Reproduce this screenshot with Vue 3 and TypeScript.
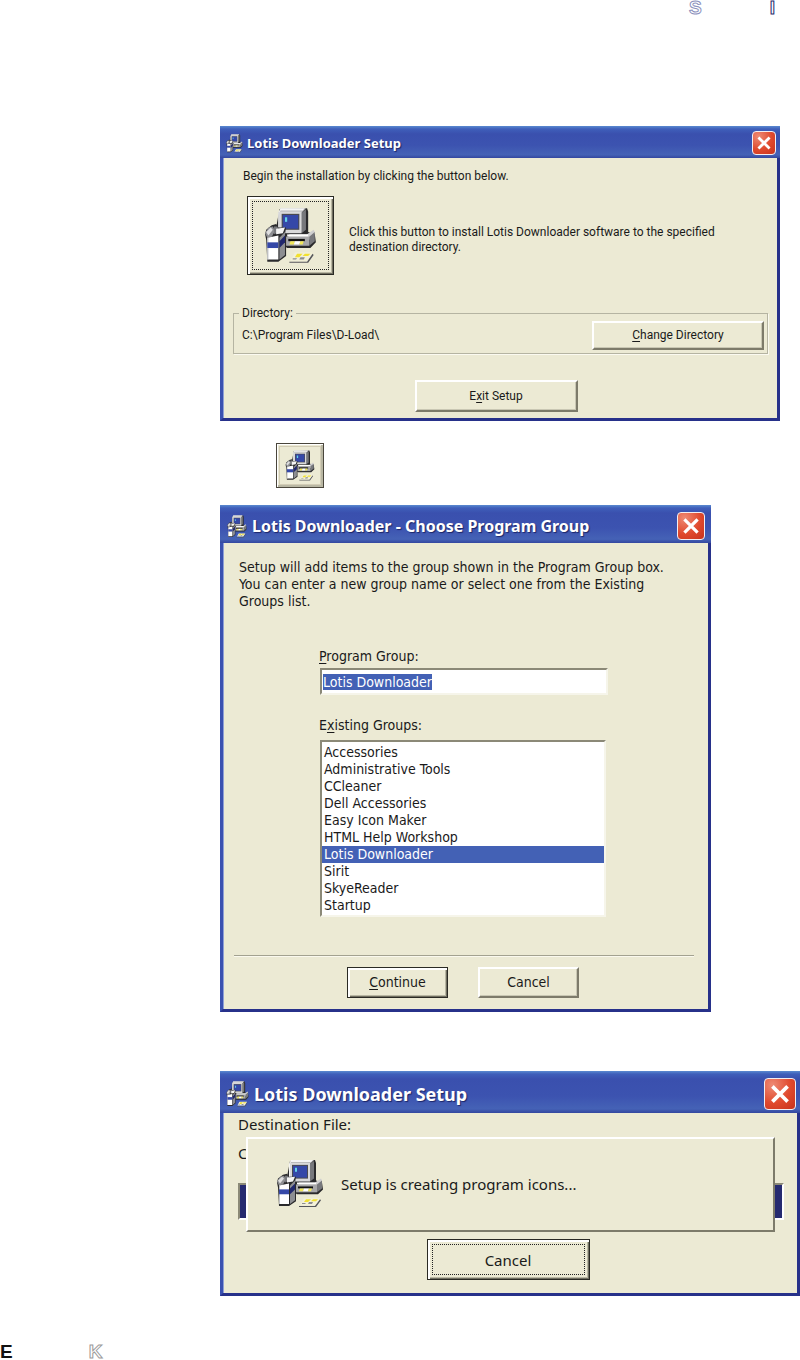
<script setup lang="ts">
import { defineComponent, h, onMounted, ref } from 'vue'

type Shape = [fill: string, points: string]

const shapes: Shape[] = [
  ['#2a2a2c', '15,2 40,1 41,4 41,22 47,24 48,31 43,36 22,36 12,28 12,18'],
  ['#b9b9bb', '16,1 39,1 35,5 35,22 14,22 14,5'],
  ['#f4f4f4', '16,1 38,1 36,3 16,3 15,5 15,20 14,20 14,5'],
  ['#77787c', '35,5 39,2 39,20 35,23'],
  ['#d9d9da', '15,4 35,4 35,23 15,23'],
  ['#4a4a50', '17,6 33,6 33,20 17,20'],
  ['#3548a8', '18,7 32,7 32,19 18,19'],
  ['#63d3ea', '20,9 22,9 22,13 20,13'],
  ['#cfcfd0', '24,24 40,24 46,20 47,22 42,29 22,29'],
  ['#ffffff', '22,24 41,24 41,26 22,26'],
  ['#a7a7a9', '20,26 42,26 42,34 20,34'],
  ['#77787c', '42,26 47,22 47,30 42,34'],
  ['#111', '23,28 38,28 38,30 23,30'],
  ['#f2e85a', '25,30 29,30 28,33 24,33'],
  ['#ffffff', '29,30 34,30 33,33 28,33'],
  ['#f2e85a', '34,30 37,30 36,33 33,33'],
  ['#2a2a2c', '2,24 3,20 8,16 12,15 14,18 21,18 20,24 21,26 21,43 14,48 4,48 3,29'],
  ['#8d8e92', '2,23 5,18 9,17 11,21 8,26 4,27'],
  ['#dededf', '3,22 7,18 9,20 5,25'],
  ['#77787c', '10,17 13,17 15,22 10,24'],
  ['#f4f4f4', '12,19 20,18 18,23 12,24'],
  ['#ffffff', '4,27 14,25 14,46 4,46'],
  ['#bfc0c4', '4,27 5,27 5,46 4,46'],
  ['#3548a8', '4,31 14,31 14,36 4,36'],
  ['#8d8e92', '15,27 20,22 20,42 15,46'],
  ['#20276d', '15,30 20,25 20,31 15,36'],
  ['#55565b', '24,48 40,48 45,41 46,42 41,49 24,49'],
  ['#f3f1d8', '29,40 45,40 40,47 25,47'],
  ['#f2e02e', '31,41 36,41 33,44 29,44'],
  ['#f2e02e', '38,41 43,41 41,43 36,43'],
  ['#8d8e92', '27,45 31,45 30,46 27,46'],
  ['#8d8e92', '34,44 38,44 37,46 33,46'],
]

const SetupIcon = defineComponent({
  setup: () => () =>
    h('svg', { viewBox: '1 0 48 50', preserveAspectRatio: 'none', 'aria-hidden': 'true' },
      shapes.map(([fill, points]) => h('polygon', { fill, points }))),
})

const CloseGlyph = defineComponent({
  setup: () => () =>
    h('svg', { viewBox: '0 0 24 24', 'aria-hidden': 'true' }, [
      h('path', { d: 'M7 7 L17 17 M17 7 L7 17', stroke: '#fff', 'stroke-width': 3, 'stroke-linecap': 'square', fill: 'none' }),
    ]),
})

const groups = [
  'Accessories', 'Administrative Tools', 'CCleaner', 'Dell Accessories', 'Easy Icon Maker',
  'HTML Help Workshop', 'Lotis Downloader', 'Sirit', 'SkyeReader', 'Startup',
]
const programGroup = ref('Lotis Downloader')
const selectedGroup = ref('Lotis Downloader')
const directory = ref('C:\\Program Files\\D-Load\\')
const groupInput = ref<HTMLInputElement | null>(null)

onMounted(() => {
  groupInput.value?.focus()
  groupInput.value?.select()
})
</script>

<template>
  <div class="page">
    <header class="page-head"><span class="outline faint">S</span><span class="outline">I</span></header>

    <main class="content">
      <section class="window setup" aria-label="Setup">
        <div class="titlebar">
          <SetupIcon class="title-icon" />
          <h2>Lotis Downloader Setup</h2>
          <button class="close" type="button" aria-label="Close"><CloseGlyph /></button>
        </div>
        <div class="body">
          <p class="intro">Begin the installation by clicking the button below.</p>
          <div class="install">
            <button class="btn default install-btn" type="button" aria-label="Install">
              <span class="focus"><SetupIcon class="install-icon" /></span>
            </button>
            <p>Click this button to install Lotis Downloader software to the specified<br>destination directory.</p>
          </div>
          <fieldset class="directory">
            <legend>Directory:</legend>
            <span>{{ directory }}</span>
            <button class="btn" type="button"><span><u>C</u>hange Directory</span></button>
          </fieldset>
          <button class="btn exit" type="button"><span>E<u>x</u>it Setup</span></button>
        </div>
      </section>

      <button class="mini" type="button" aria-label="Install"><span><SetupIcon class="mini-icon" /></span></button>

      <section class="window choose" aria-label="Choose Program Group">
        <div class="titlebar">
          <SetupIcon class="title-icon" />
          <h2>Lotis Downloader - Choose Program Group</h2>
          <button class="close" type="button" aria-label="Close"><CloseGlyph /></button>
        </div>
        <div class="body">
          <p class="intro">
            Setup will add items to the group shown in the Program Group box.<br>
            You can enter a new group name or select one from the Existing<br>
            Groups list.
          </p>
          <div class="fields">
            <label for="group"><u>P</u>rogram Group:</label>
            <input id="group" ref="groupInput" v-model="programGroup" type="text" spellcheck="false">
            <label for="existing">E<u>x</u>isting Groups:</label>
            <select id="existing" v-model="selectedGroup" size="10">
              <option v-for="g in groups" :key="g" :value="g" :class="{ picked: g === selectedGroup }">{{ g }}</option>
            </select>
          </div>
          <hr>
          <div class="actions">
            <button class="btn default" type="button"><span><u>C</u>ontinue</span></button>
            <button class="btn" type="button">Cancel</button>
          </div>
        </div>
      </section>

      <section class="window progress" aria-label="Setup progress">
        <div class="titlebar">
          <SetupIcon class="title-icon" />
          <h2>Lotis Downloader Setup</h2>
          <button class="close" type="button" aria-label="Close"><CloseGlyph /></button>
        </div>
        <div class="body">
          <p>Destination File:</p>
          <p class="file">C</p>
          <div class="bar"></div>
          <button class="btn default cancel" type="button"><span class="focus">Cancel</span></button>
          <div class="popup" role="status">
            <SetupIcon class="popup-icon" />
            <p>Setup is creating program icons...</p>
          </div>
        </div>
      </section>
    </main>

    <footer class="page-foot"><b>E</b><span class="outline gray">K</span></footer>
  </div>
</template>

<style>
body { background: #fff; }
</style>

<style scoped>
.page {
  display: flex;
  flex-direction: column;
  overflow: hidden;
  color: #1a1a1a;
}
p, h2 { margin: 0; font-weight: normal; }
button, input, select { font: inherit; color: inherit; border-radius: 0; }
button { padding: 0; }
u { text-underline-offset: 2px; text-decoration-thickness: 1px; }

.page-head, .page-foot { font: bold 19px/14px "Liberation Sans", Arial, sans-serif; display: flex; }
.page-head { padding: 1px 25px 0 0; justify-content: flex-end; gap: 68px; }
.page-foot { margin-top: 49px; gap: 76px; }
.page-foot b { color: #111; }
.outline { color: #fff; -webkit-text-stroke: 1px #1f2a6b; }
.outline.faint { -webkit-text-stroke-color: #8b91bd; }
.outline.gray { -webkit-text-stroke-color: #9a9a9a; }

.content { margin-top: 111px; padding-left: 220px; display: flex; flex-direction: column; align-items: flex-start; }

.window {
  box-sizing: border-box;
  width: 100%;
  background: #ecead4;
  border: solid #3a51b0;
  border-width: 0 3px 3px;
  border-right-color: #27318a;
  border-bottom-color: #27318a;
  box-shadow: inset 1px 0 #8f9fd6;
}
.titlebar {
  display: flex;
  align-items: center;
  box-sizing: border-box;
  margin: 0 -3px;
  background: linear-gradient(#5a8ad0, #3f5fba 3px, #3a50ae 8px, #3c53b0 60%, #4562b6 90%, #33479f);
}
h2 { flex: 1; color: #fff; font-family: "Noto Sans", "Open Sans", sans-serif; font-weight: bold; text-shadow: 1px 1px 1px #1b2568; white-space: nowrap; }
.title-icon { flex: none; }
.close {
  box-sizing: border-box;
  flex: none;
  border: 1px solid #f2eef2;
  border-radius: 4px;
  background: radial-gradient(circle at 25% 20%, #ee8a74, #e0492d 55%, #c8321c);
}
.close svg { display: block; width: 100%; height: 100%; }

.btn {
  box-sizing: border-box;
  display: flex;
  align-items: center;
  justify-content: center;
  background: #ecead4;
  border: 2px solid;
  border-color: #fff #7d7b6a #7d7b6a #fff;
  box-shadow: inset -1px -1px #c9c7b3;
}
.btn.default { border: 1px solid #2a2a24; box-shadow: inset 2px 2px #fff, inset -1px -1px #6f6e60, inset -2px -2px #b9b7a3; }
.focus { flex: 1; align-self: stretch; margin: 4px; display: flex; align-items: center; justify-content: center; border: 1px dotted #222; }

/* Setup window */
.setup { max-width: 560px; font: 12px/15px Roboto, Tahoma, sans-serif; }
.setup .titlebar { height: 32px; padding: 2px 4px 0 6px; gap: 4px; }
.setup .title-icon { width: 17px; height: 19px; }
.setup h2 { font-size: 13px; }
.setup .close { width: 24px; height: 24px; }
.setup .body { padding: 11px 9px 6px 10px; display: flex; flex-direction: column; }
.setup .intro { margin-left: 10px; }
.install { display: flex; align-items: center; gap: 15px; margin: 12px 0 0 14px; }
.install > p { padding-top: 9px; }
.install-btn { width: 87px; height: 79px; flex: none; }
.install-icon { width: 53px; height: 57px; }
.directory {
  display: flex;
  align-items: center;
  justify-content: space-between;
  box-sizing: border-box;
  margin: 31px 0 0;
  padding: 0 3px 3px 8px;
  border: 1px solid #b5b4a2;
  box-shadow: 1px 1px #fbfaf0;
  min-width: 0;
  height: 48px;
}
.directory legend { padding: 0 3px; margin-left: -3px; }
.directory .btn { width: 172px; height: 29px; }
.exit { width: 163px; height: 32px; align-self: center; margin-top: 26px; margin-right: 9px; }

/* Small install button */
.mini { display: flex; width: 48px; height: 45px; margin: 22px 0 0 56px; padding: 2px; background: #ecead4; border: 1px solid #4a463c; box-sizing: border-box; box-shadow: inset 1px 1px #fff, inset -2px -2px #b9b7a3; }
.mini span { flex: 1; display: flex; align-items: center; justify-content: center; border: 1px solid #d3cdb6; }
.mini-icon { width: 30px; height: 31px; }

/* Program group window */
.choose { max-width: 491px; margin-top: 17px; font: 14px/17px "DejaVu Sans Condensed", Tahoma, sans-serif; }
.choose .titlebar { height: 38px; padding: 4px 6px 0 7px; gap: 5px; }
.choose .title-icon { width: 20px; height: 23px; }
.choose h2 { font-size: 16px; }
.choose .close { width: 28px; height: 28px; }
.choose .body { padding: 16px 14px 11px 11px; }
.choose .intro { margin-left: 5px; }
.fields { display: flex; flex-direction: column; margin: 38px 86px 0; }
.fields label { margin-left: -1px; }
.fields input, .fields select {
  box-sizing: border-box;
  outline: none;
  background: #fff;
  border: 2px solid;
  border-color: #8b8977 #f6f5ea #f6f5ea #8b8977;
}
.fields input { height: 27px; margin: 3px 0 22px; padding: 0 0 0 1px; line-height: 20px; }
.fields input::selection { background: #4361b5; color: #fff; }
.fields select { margin: 6px 2px 0 0; padding: 2px 0 1px; overflow: hidden; scrollbar-width: none; }
.fields option { padding: 0 2px; min-height: 17px; line-height: 17px; }
.fields option.picked { background: #4361b5 linear-gradient(#4361b5, #4361b5); color: #fff; }
.choose hr { border: 0; border-top: 1px solid #a3a290; border-bottom: 1px solid #faf9ee; margin: 38px 0 10px; }
.actions { display: flex; justify-content: center; gap: 30px; padding-right: 2px; }
.actions .btn { width: 101px; height: 31px; }

/* Progress window */
.progress { margin-top: 59px; font: 15px/20px "Noto Sans", Tahoma, sans-serif; }
.progress .titlebar { height: 42px; padding: 4px 4px 0 6px; gap: 5px; }
.progress .title-icon { width: 23px; height: 26px; }
.progress h2 { font-size: 18px; }
.progress .close { width: 32px; height: 32px; }
.progress .body { position: relative; padding: 1px 13px 13px 15px; display: flex; flex-direction: column; }
.progress .file { margin-top: 9px; }
.bar { height: 37px; margin-top: 20px; box-sizing: border-box; background: #252a70; border: 2px solid; border-color: #8b8977 #fff #fff #8b8977; }
.cancel { width: 163px; height: 41px; align-self: center; margin: 19px 6px 0 0; }
.popup {
  position: absolute;
  inset: 24px 22px 61px 23px;
  display: flex;
  align-items: center;
  gap: 17px;
  padding: 0 28px 2px;
  background: #ecead4;
  border: 2px solid;
  border-color: #fff #7d7b6a #7d7b6a #fff;
}
.popup-icon { width: 48px; height: 49px; }
</style>
